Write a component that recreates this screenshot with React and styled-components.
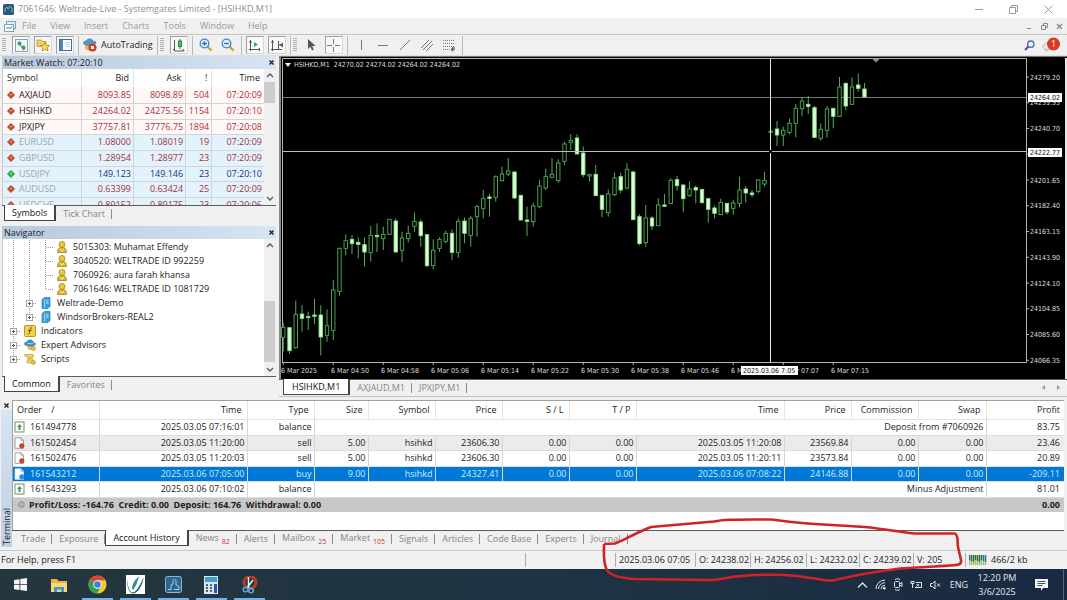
import React from "react";
import styled, { createGlobalStyle, css } from "styled-components";

const GlobalStyle = createGlobalStyle`
  * { box-sizing: border-box; }
  body { margin: 0; background: #f0f0f0; }
  body, button, input, table { font: 9px/12px "Open Sans", "Noto Sans", sans-serif; color: #1c1c1c; }
  button { border: 0; padding: 0; background: none; white-space: nowrap; }
  ul { list-style: none; margin: 0; padding: 0; }
`;

const Desktop = styled.div`
  position: relative;
  display: flex;
  flex-direction: column;
  min-height: 100vh;
  background: #f0f0f0;
`;

/* ---------- window header ---------- */

const TitleBar = styled.header`
  display: flex;
  align-items: center;
  height: 18px;
  padding: 0 14px 0 3px;
  background: #fff;
  color: #8f8f8f;
  gap: 4px;
`;
const Title = styled.h1`
  margin: 0;
  flex: 1;
  font-size: 9px;
  font-weight: 400;
`;
const WindowButtons = styled.div`
  display: flex;
  align-items: center;
  gap: ${(p) => p.$gap}px;
  button { display: flex; }
`;
const MenuBar = styled.nav`
  display: flex;
  align-items: center;
  height: 16px;
  padding: 0 4px;
  gap: 14px;
  svg { flex: none; }
`;
const MenuItem = styled.button`
  color: #9a9a9a;
  &:first-of-type { margin-left: -8px; }
`;
const Spacer = styled.div`flex: 1;`;

const Toolbar = styled.div`
  display: flex;
  align-items: center;
  height: 22px;
  padding: 0 5px 0 2px;
  border-top: 1px solid #c4c4c4;
  border-bottom: 1px solid #e0e0e0;
`;
const Grip = styled.span`
  width: 4px;
  height: 14px;
  margin-right: 4px;
  background: repeating-linear-gradient(#b0b0b0 0 1px, transparent 1px 2px);
`;
const ToolSep = styled.span`
  width: 1px;
  height: 19px;
  margin: 0 2px;
  background: #b9b9b9;
`;
const ToolButton = styled.button`
  display: flex;
  align-items: center;
  justify-content: center;
  gap: 4px;
  width: ${(p) => (p.$wide ? "auto" : "18px")};
  height: 18px;
  margin: 0 2px;
  ${(p) => p.$pressed && css`
    background: #f8f8f8;
    border: 1px solid #d8d8d8;
    border-top-color: #a0a0a0;
    border-left-color: #a0a0a0;
  `}
`;

/* ---------- panels ---------- */

const Workspace = styled.main`
  flex: 1;
  display: grid;
  grid-template-columns: 279px minmax(0, 1fr);
  align-items: start;
`;
const Sidebar = styled.aside`
  display: flex;
  flex-direction: column;
  gap: 4px;
  padding: 0 3px 0 2px;
`;
const Panel = styled.section`
  display: flex;
  flex-direction: column;
`;
const PanelHead = styled.div`
  display: flex;
  align-items: center;
  justify-content: space-between;
  height: 13px;
  padding: 0 1px 0 2px;
  background: linear-gradient(90deg, #b8c9dc, #d6e4f3);
  h2 { margin: 0; font-size: 9px; font-weight: 400; }
  button { display: flex; }
`;
const PanelBody = styled.div`
  display: flex;
  height: ${(p) => p.$height}px;
  overflow: hidden;
  background: #fff;
  border: solid #c9c9c9;
  border-width: 0 0 0 1px;
`;
const PanelContent = styled.div`
  flex: 1;
  min-width: 0;
`;
const ScrollBar = styled.div`
  display: flex;
  flex-direction: column;
  align-items: center;
  justify-content: space-between;
  width: 12px;
  padding: 4px 0;
  background: linear-gradient(#cdcdcd, #cdcdcd) 0 ${(p) => p.$top}px / 11px ${(p) => p.$size}px no-repeat #f0f0f0;
`;

const TabRow = styled.div`
  display: flex;
  align-items: flex-start;
  height: ${(p) => p.$height}px;
  padding-left: ${(p) => p.$indent || 2}px;
  border-top: 1px solid #5c5c5c;
`;
const Tab = styled.button`
  position: relative;
  height: 15px;
  padding: 0 ${(p) => p.$pad || 7}px;
  color: #858585;
  &::after {
    content: "";
    position: absolute;
    right: 0;
    top: 3px;
    height: 10px;
    border-right: 1px solid #8c8c8c;
  }
  ${(p) => p.$active && css`
    margin-top: -1px;
    height: 16px;
    background: #fff;
    color: #111;
    border: solid #444;
    border-width: 0 2px 1px 1px;
    &::after { display: none; }
  `}
`;
const Count = styled.sub`
  margin-left: 3px;
  font-size: 7px;
  line-height: 7px;
  color: #d03030;
`;

const QuoteTable = styled.table`
  width: 100%;
  table-layout: fixed;
  border-collapse: collapse;
  th, td {
    padding: 0 2px;
    text-align: right;
    font-weight: 400;
    line-height: 12px;
    border-right: 1px solid #d4d4d4;
  }
  th { height: 18px; padding-right: 4px; border-color: #e4e4e4; }
  td { border-bottom: 1px solid #d4d4d4; }
  th:first-child, td:first-child { text-align: left; padding-left: 4px; }
  th:last-child, td:last-child { border-right: 0; }
`;
const QuoteRow = styled.tr`
  height: 16px;
  &:nth-child(3n) { height: 15px; }
  background: ${(p) => (p.$live ? "#fff8f7" : "#e2f3fd")};
  td { color: ${(p) => (p.$up ? "#1b2f86" : "#a8303a")}; }
  td:first-child { color: ${(p) => (p.$live ? "#1c1c1c" : "#9fa6aa")}; }
`;
const SymbolCell = styled.span`
  display: flex;
  align-items: center;
  gap: 4px;
  svg { flex: none; }
`;

const Tree = styled.ul`
  padding: 1px 0 0 2px;
`;
const TreeRow = styled.li`
  display: flex;
  align-items: center;
  height: 14px;
  white-space: nowrap;
  svg { flex: none; }
`;
const TreeIcon = styled.span`
  display: flex;
  margin: 0 5px 0 3px;
`;

/* ---------- chart ---------- */

const ChartPane = styled.section`
  min-width: 0;
  svg.plot { display: block; width: 100%; height: auto; background: #000; }
  svg.plot text { font: 7px "DejaVu Sans Condensed", "DejaVu Sans", sans-serif; fill: #dedede; }
  svg.plot text.dark { fill: #111; }
`;
const ChartTabs = styled(TabRow)`
  position: relative;
  padding-right: 6px;
  border-bottom: 1px solid #c2c2c2;
  > svg { align-self: center; }
`;

/* ---------- terminal ---------- */

const Terminal = styled.section`
  display: grid;
  grid-template-columns: 12px minmax(0, 1fr);
  padding: 3px 3px 3px 0;
  border-bottom: 1px solid #c8c8c8;
`;
const TerminalGrip = styled.div`
  display: flex;
  flex-direction: column;
  align-items: center;
  button { display: flex; height: 10px; align-items: center; }
`;
const TerminalName = styled.h2`
  flex: 1;
  margin: 0;
  width: 11px;
  font-size: 9px;
  line-height: 11px;
  font-weight: 400;
  writing-mode: vertical-rl;
  transform: rotate(180deg);
  background: linear-gradient(#c0d0e2, #d6e4f3);
  padding-top: 2px;
`;
const TerminalView = styled.div`
  display: flex;
  flex-direction: column;
  background: #f0f0f0;
`;
const TerminalSheet = styled.div`
  height: 130px;
  background: #fff;
  border: solid #a0a0a0;
  border-width: 1px 0 0 1px;
`;
const OrderTable = styled.table`
  width: 100%;
  table-layout: fixed;
  border-collapse: collapse;
  th, td {
    padding: 0 2px;
    font-weight: 400;
    line-height: 12px;
    text-align: right;
    white-space: pre;
  }
  th {
    height: 18px;
    padding-right: 5px;
    border-right: 1px solid #e3e3e3;
    border-bottom: 1px solid #e3e3e3;
  }
  td { border-right: 1px solid #d6d6d6; }
  th:first-child { text-align: left; padding-left: 4px; }
  td:first-child { text-align: left; padding-left: 1px; }
  th:last-child, td:last-child { border-right: 0; padding-right: 4px; }
`;
const OrderRow = styled.tr`
  height: 16px;
  &:nth-child(even) { height: 15px; }
  background: ${(p) => (p.$selected ? "#0078d7" : p.$shaded ? "#ebebeb" : "#fff")};
  td { color: ${(p) => (p.$selected ? "#c9eeff" : "#1c1c1c")}; border-bottom: 1px solid #dcdcdc; }
`;
const SummaryRow = styled.tr`
  height: 15px;
  background: #c8c8c8;
  && td { font-weight: 700; border-right: 0; }
`;
const SummaryText = styled.span`
  display: flex;
  align-items: center;
  gap: 4px;
  padding-left: 4px;
`;
const OrderCell = styled.span`
  display: flex;
  align-items: center;
  gap: 5px;
  svg { flex: none; }
`;

/* ---------- status bar and taskbar ---------- */

const Footer = styled.footer`position: relative;`;
const StatusBar = styled.div`
  display: flex;
  align-items: center;
  height: 18px;
`;
const StatusCell = styled.span`
  display: flex;
  align-items: center;
  gap: 4px;
  flex: ${(p) => (p.$width ? "none" : 1)};
  width: ${(p) => (p.$width ? `${p.$width}px` : "auto")};
  height: 14px;
  padding-left: ${(p) => (p.$first ? 1 : 3)}px;
  border-left: ${(p) => (p.$first ? 0 : 1)}px solid #adadad;
  white-space: nowrap;
`;
const TaskBar = styled.div`
  display: flex;
  align-items: stretch;
  height: 31px;
  padding-right: 3px;
  background: linear-gradient(90deg, #24373f, #1e3243 60%, #1a2942);
  color: #e8e8e8;
`;
const TaskButton = styled.button`
  display: flex;
  align-items: center;
  justify-content: center;
  width: ${(p) => (p.$start ? 40 : 38)}px;
  background: ${(p) => (p.$open ? "linear-gradient(#76b0e4, #76b0e4) 50% 100% / 31px 2px no-repeat" : "none")};
`;
const Tray = styled.div`
  display: flex;
  align-items: center;
  gap: 7px;
  padding-right: 15px;
  border-right: 1px solid #55667a;
`;
const Language = styled.span`
  margin-left: 2px;
`;
const Clock = styled.time`
  width: 44px;
  margin-right: 9px;
  line-height: 14px;
  text-align: center;
`;
const Annotation = styled.svg`
  position: absolute;
  right: 103px;
  bottom: 16px;
  pointer-events: none;
`;

/* ---------- small drawings ---------- */

const Svg = ({ w = 14, h = w, box, children }) => (
  <svg width={w} height={h} viewBox={box || `0 0 ${w} ${h}`} fill="none" aria-hidden="true">{children}</svg>
);
const CloseX = () => <Svg w={7}><path d="M1.5 1.5l4 4m0-4l-4 4" stroke="#222" strokeWidth="1.4" /></Svg>;
const Chevron = ({ up }) => <Svg w={8} h={5}><path d={up ? "M1 4l3-3 3 3" : "M1 1l3 3 3-3"} stroke="#555" strokeWidth="1.3" /></Svg>;
const Diamond = ({ up }) => (
  <Svg w={8}>
    <path d="M4 .5L7.5 4 4 7.5.5 4z" fill={up ? "#34b046" : "#cf4a22"} stroke={up ? "#1d8a33" : "#9e3a1a"} strokeWidth=".8" />
    <circle cx="4" cy="3.6" r=".9" fill={up ? "#a6eaa0" : "#f4b183"} />
  </Svg>
);
const Lens = ({ minus }) => (
  <Svg w={14}>
    <path d="M8.5 8.5l4 4" stroke="#c9a23c" strokeWidth="2.4" />
    <circle cx="5.5" cy="5.5" r="4.3" fill="#dcefff" stroke="#3b86c8" strokeWidth="1.3" />
    <path d={minus ? "M3.2 5.5h4.6" : "M3.2 5.5h4.6M5.5 3.2v4.6"} stroke="#2b6fb0" strokeWidth="1.3" />
  </Svg>
);
const LogoIcon = () => (
  <Svg w={11}>
    <rect width="11" height="11" rx="1.5" fill="#2d5878" />
    <path d="M2 8V5l2-2 1 2 2-3 2 2v4" stroke="#87b4d2" />
  </Svg>
);
const PersonIcon = () => (
  <Svg w={12}>
    <path d="M1.5 11.5c0-3 .8-5 4.500-5s4.500 2 4.500 5z" fill="#d9b52c" stroke="#a5811a" strokeWidth=".8" />
    <circle cx="6" cy="3.500" r="3" fill="#e8c63c" stroke="#a5811a" strokeWidth=".8" />
    <path d="M4.200 8l1.800 2.500L7.800 8M5 2.500l1-.5" stroke="#fff0a0" />
  </Svg>
);
const ServerIcon = () => (
  <Svg w={12}>
    <path d="M2 2.500L4.500.5H10v9L8 11.500H2z" fill="#38a4dc" stroke="#1f78ac" strokeWidth=".7" />
    <path d="M4.500 2.500v8" stroke="#8fd2f2" />
    <path d="M6 4h2.500M6 6h2.500" stroke="#dff4ff" strokeWidth=".8" />
  </Svg>
);
const IndicatorIcon = () => (
  <Svg w={12}>
    <rect x=".5" y=".5" width="11" height="11" rx="1" fill="#f0d24a" stroke="#b8962a" />
    <path d="M8 3c-2-.8-2 1-2.300 3S5 9.500 3.800 9M4.200 5.500h3.300" stroke="#5e4b10" strokeWidth="1" />
  </Svg>
);
const ExpertIcon = () => (
  <Svg w={12}>
    <path d="M3.500 6h6v4l-3 1.500-3-1.500z" fill="#e6bf63" />
    <path d="M.5 4.500C1 3 3 3.200 3.500 2S8 .2 9 2.500s2.500 1 2.500 2.500-3 2.200-6 2S0 6 .5 4.500z" fill="#3d93c8" stroke="#256a99" strokeWidth=".6" />
    <path d="M3.500 4c2 1 4 1 5.500 0" stroke="#b5dcf2" />
    <circle cx="9.500" cy="9.500" r="2" fill="#efc531" stroke="#a98516" strokeWidth=".6" />
  </Svg>
);
const ScriptIcon = () => (
  <Svg w={12}>
    <path d="M1 1.500h8c1 0 1 2 0 2H8l1 6.500H3L4 3.500H1.500c-1 0-1.200-2-.5-2z" fill="#f3d76a" stroke="#b8962a" strokeWidth=".7" />
    <path d="M4.500 5h3M4.500 7h3" stroke="#b8962a" strokeWidth=".7" />
    <circle cx="9.500" cy="9.500" r="2" fill="#efc531" stroke="#a98516" strokeWidth=".6" />
  </Svg>
);
const BalanceIcon = () => (
  <Svg w={11} h={12}>
    <rect x="1" y="1" width="9" height="10" fill="#fff" stroke="#6e8f6e" />
    <path d="M5.500 3L8 6H6.500v3h-2V6H3z" fill="#35a045" />
  </Svg>
);
const DealIcon = ({ selected }) => (
  <Svg w={11} h={12}>
    <path d="M1 .8h6l2.500 2.500v8H1z" fill="#fff" stroke={selected ? "#cfe6fa" : "#888"} strokeWidth=".8" />
    <path d="M7 .8v2.500h2.500" stroke="#888" strokeWidth=".7" />
    <circle cx="7.800" cy="8.800" r="2.600" fill={selected ? "#2f8fdf" : "#c9442c"} />
  </Svg>
);
const Branch = ({ kind, last }) => (
  <Svg w={16} h={14}>
    {kind !== "box" && <path d={last ? "M8.500 0v7" : "M8.500 0v14"} stroke="#9a9a9a" strokeDasharray="1 1" />}
    {kind === "tee" && <path d="M9 7.500h7" stroke="#9a9a9a" strokeDasharray="1 1" />}
    {kind === "box" && (
      <>
        <path d={last ? "M8.500 0v5" : "M8.500 0v14"} stroke="#9a9a9a" strokeDasharray="1 1" />
        <path d="M12 7.500h4" stroke="#9a9a9a" strokeDasharray="1 1" />
        <rect x="5.500" y="4.500" width="6" height="6" fill="#fff" stroke="#a5a5a5" />
        <path d="M7 7.500h3M8.500 6v3" stroke="#555" />
      </>
    )}
  </Svg>
);

/* ---------- data ---------- */

const quotes = [
  ["AXJAUD", "8093.85", "8098.89", "504", "07:20:09", true],
  ["HSIHKD", "24264.02", "24275.56", "1154", "07:20:10", true],
  ["JPXJPY", "37757.81", "37776.75", "1894", "07:20:08", true],
  ["EURUSD", "1.08000", "1.08019", "19", "07:20:09"],
  ["GBPUSD", "1.28954", "1.28977", "23", "07:20:09"],
  ["USDJPY", "149.123", "149.146", "23", "07:20:10"],
  ["AUDUSD", "0.63399", "0.63424", "25", "07:20:09"],
  ["USDCHF", "0.89152", "0.89175", "23", "07:20:06"],
];

const tree = [
  [3, "5015303: Muhamat Effendy", PersonIcon],
  [3, "3040520: WELTRADE ID 992259", PersonIcon],
  [3, "7060926: aura farah khansa", PersonIcon],
  [3, "7061646: WELTRADE ID 1081729", PersonIcon, true],
  [2, "Weltrade-Demo", ServerIcon],
  [2, "WindsorBrokers-REAL2", ServerIcon, true],
  [1, "Indicators", IndicatorIcon],
  [1, "Expert Advisors", ExpertIcon],
  [1, "Scripts", ScriptIcon, true],
];

const orderColumns = [
  ["Order", 86], ["Time", 148], ["Type", 67], ["Size", 54], ["Symbol", 67], ["Price", 67], ["S / L", 67],
  ["T / P", 67], ["Time", 148], ["Price", 67], ["Commission", 67], ["Swap", 68], ["Profit", 78],
];
const orders = [
  { id: "161494778", time: "2025.03.05 07:16:01", type: "balance", note: "Deposit from #7060926", profit: "83.75" },
  { id: "161502454", time: "2025.03.05 11:20:00", type: "sell", cells: ["5.00", "hsihkd", "23606.30", "0.00", "0.00", "2025.03.05 11:20:08", "23569.84", "0.00", "0.00"], profit: "23.46", shaded: true },
  { id: "161502476", time: "2025.03.05 11:20:03", type: "sell", cells: ["5.00", "hsihkd", "23606.30", "0.00", "0.00", "2025.03.05 11:20:11", "23573.84", "0.00", "0.00"], profit: "20.89" },
  { id: "161543212", time: "2025.03.06 07:05:00", type: "buy", cells: ["9.00", "hsihkd", "24327.41", "0.00", "0.00", "2025.03.06 07:08:22", "24146.88", "0.00", "0.00"], profit: "-209.11", selected: true },
  { id: "161543293", time: "2025.03.06 07:10:02", type: "balance", note: "Minus Adjustment", profit: "81.01" },
];
const terminalTabs = [
  ["Trade"], ["Exposure"], ["Account History"], ["News", "82"], ["Alerts"], ["Mailbox", "25"], ["Market", "105"],
  ["Signals"], ["Articles"], ["Code Base"], ["Experts"], ["Journal"],
];

/* Bars: [falling, high, bodyTop, bodyBottom, low] in thirds of a pixel below each block's base line. */
const barBlocks = [
  { base: 180, bars: [
    [0, 428, 442, 472, 515], [1, 443, 443, 512, 522], [0, 362, 403, 503, 506], [1, 375, 402, 415, 455],
    [1, 395, 410, 413, 450], [1, 356, 405, 409, 432], [1, 376, 405, 471, 526], [0, 388, 437, 466, 486],
    [0, 300, 330, 451, 480], [0, 203, 205, 334, 347], [0, 163, 182, 205, 226], [1, 165, 178, 191, 222],
    [1, 172, 187, 193, 235], [1, 172, 194, 216, 260], [0, 138, 166, 217, 245], [1, 130, 166, 170, 216],
    [0, 140, 163, 176, 210], [0, 118, 118, 163, 163], [1, 115, 123, 216, 217], [0, 155, 174, 211, 246],
    [0, 137, 160, 176, 187], [0, 97, 124, 139, 155], [1, 118, 126, 167, 200], [1, 164, 164, 257, 262],
    [0, 178, 211, 257, 268], [0, 172, 178, 205, 215], [0, 152, 160, 184, 190], [1, 148, 160, 217, 240],
    [0, 115, 124, 217, 233], [1, 113, 123, 160, 190], [0, 108, 115, 166, 200], [0, 74, 80, 110, 170],
    [0, 30, 56, 85, 115], [1, 42, 51, 55, 110], [0, -14, -10, 52, 65], [0, -40, -18, 2, 4],
    [0, -66, -27, -18, -12], [1, -26, -24, 54, 56], [1, 46, 46, 120, 122], [1, 80, 120, 124, 168],
  ] },
  { base: 120, bars: [
    [0, 248, 258, 305, 320], [0, 180, 198, 260, 265], [0, 146, 170, 204, 210], [0, 114, 163, 172, 175],
    [0, 118, 129, 182, 188], [0, 66, 72, 124, 136], [0, 42, 61, 67, 90], [1, 43, 54, 102, 102],
    [1, 80, 99, 164, 172], [0, 163, 164, 168, 185], [1, 135, 163, 227, 227], [1, 226, 226, 268, 292],
    [0, 208, 222, 278, 290], [0, 158, 174, 224, 228], [1, 158, 170, 210, 220], [0, 130, 148, 204, 208],
    [1, 152, 156, 299, 300], [1, 283, 290, 371, 376], [0, 255, 294, 368, 380], [1, 288, 294, 318, 330],
    [0, 235, 255, 317, 318], [1, 222, 255, 259, 260], [0, 175, 181, 250, 252], [1, 168, 179, 197, 212],
    [1, 193, 195, 236, 277], [0, 184, 207, 227, 230], [1, 196, 203, 210, 250], [1, 208, 208, 248, 250],
    [1, 236, 236, 268, 308], [1, 256, 264, 280, 295], [0, 236, 247, 284, 285], [1, 250, 250, 276, 284],
    [0, 240, 249, 265, 284], [0, 170, 210, 250, 262], [1, 198, 207, 219, 248], [1, 210, 219, 224, 232],
    [0, 178, 180, 214, 220], [0, 156, 181, 192, 200], [0, 33, 33, 37, 37],
  ] },
  { base: 50, bars: [
    [1, 213, 237, 255, 288], [0, 230, 241, 255, 288], [0, 206, 220, 247, 253], [0, 162, 175, 220, 262],
    [0, 143, 153, 176, 198], [1, 138, 163, 169, 192], [1, 168, 173, 262, 264], [0, 220, 238, 265, 272],
    [0, 168, 177, 241, 263], [1, 175, 175, 199, 235], [0, 81, 111, 199, 201], [1, 98, 100, 168, 181],
    [0, 82, 111, 163, 165], [1, 70, 105, 115, 125], [1, 99, 117, 141, 141],
  ] },
];
const bars = barBlocks
  .flatMap(({ base, bars: list }) => list.map(([falling, ...ys]) => [falling, ...ys.map((y) => base + y / 3)]))
  .map((bar, i) => [283.25 + i * 6.25, ...bar]);

const prices = ["24279.20", "24259.95", "24240.70", "24220.90", "24201.65", "24182.40", "24163.15", "24143.90", "24124.10", "24104.85", "24085.60", "24066.35"];
const times = ["6 Mar 2025", "6 Mar 04:50", "6 Mar 04:58", "6 Mar 05:06", "6 Mar 05:14", "6 Mar 05:22", "6 Mar 05:30", "6 Mar 05:38", "6 Mar 05:46", "6 Mar 05:54", "6 Mar 07:07", "6 Mar 07:15"];

function PriceChart() {
  return (
    <svg className="plot" viewBox="279 56 788 323" role="img" aria-label="HSIHKD one minute candlestick chart">
      <rect x="279" y="56" width="2" height="323" fill="#8a8a8a" />
      <path d="M279 56.500h788" stroke="#777" />
      <path d="M282.500 363V58.500h744V362.500H282.500" stroke="#b5b5b5" fill="none" />
      <path d="M1066 58v321" stroke="#e8e8e8" strokeWidth="2" />
      <path d="M283 97.500h743" stroke="#73777d" />
      <path d="M872 58.500h8l-4 4z" fill="#8a93a8" />
      {bars.map(([x, falling, high, top, bottom, low], i) => (
        <g key={i}>
          <path d={`M${x} ${high}V${top}M${x} ${bottom}V${low}`} stroke="#4fae55" />
          <rect x={x - 1.7} y={top} width="3.4" height={Math.max(bottom - top, 1)} fill={falling ? "#d9ffd2" : "#000"} stroke={falling ? "#8fe08c" : "#4fae55"} strokeWidth=".9" />
        </g>
      ))}
      <path d="M283 151.500h743" stroke="#bdbdbd" />
      <path d="M770.500 59V363" stroke="#e6e6e6" />
      <rect x="769" y="150" width="3" height="3" fill="#000" />
      <path d="M285 63h6l-3 4z" fill="#fff" />
      <text x="294" y="67" xmlSpace="preserve">HSIHKD,M1  24270.02 24274.02 24264.02 24264.02</text>
      {prices.map((p, i) => (
        <g key={p}>
          <path d={`M1026 ${77 + i * 25.75}h3`} stroke="#b5b5b5" />
          <text x="1030" y={79.500 + i * 25.75}>{p}</text>
        </g>
      ))}
      {times.map((t, i) => (
        <g key={t}>
          <path d={`M${283.25 + i * 50} 363v2`} stroke="#b5b5b5" />
          <text x={281 + i * 50} y="373">{t}</text>
        </g>
      ))}
      <rect x="1028" y="93" width="34" height="9" fill="#fff" />
      <text className="dark" x="1030" y="100">24264.02</text>
      <rect x="1028" y="148" width="34" height="9" fill="#fff" />
      <text className="dark" x="1030" y="155">24222.77</text>
      <rect x="741" y="366" width="57" height="9" fill="#fff" />
      <text className="dark" x="743" y="373">2025.03.06 7:05</text>
    </svg>
  );
}

function MainToolbar() {
  const stroke = { stroke: "#777", strokeWidth: 1 };
  return (
    <Toolbar>
      <Grip />
      <ToolButton $pressed aria-label="Market Watch"><Svg w={13}><rect x=".5" y=".5" width="12" height="12" fill="#eef6fb" stroke="#7aa5bd" /><path d="M4 5l5 5" stroke="#3a7d48" /><circle cx="4.500" cy="4.500" r="2" fill="#38a04a" /><circle cx="8.500" cy="8.500" r="2" fill="#35a06a" /><path d="M8.500 7.500l2 2-2 2-1-1z" fill="#d45b36" /></Svg></ToolButton>
      <ToolButton $pressed aria-label="Navigator"><Svg w={14}><path d="M1 2h4l1 1.500h4v5H1z" fill="#f2cf63" stroke="#b8922c" strokeWidth=".8" /><path d="M9 4.500l1.500 2.800 3 .3-2.200 2 .7 3.200-3-1.500-3 1.500.7-3.200-2.200-2 3-.3z" fill="#f9dc55" stroke="#a88420" strokeWidth=".8" /></Svg></ToolButton>
      <ToolButton $pressed aria-label="Terminal"><Svg w={13} h={12}><rect x=".5" y=".5" width="12" height="11" fill="#fff" stroke="#39729f" /><path d="M1 1h3v10H1z" fill="#4d87b5" /><path d="M6 3.500h5M6 5.500h5M6 7.500h5" stroke="#a9c4d8" strokeWidth=".7" /></Svg></ToolButton>
      <ToolSep />
      <ToolButton $wide>
        <Svg w={14}><path d="M2 6h8v5l-4 2-4-2z" fill="#e2bb58" /><path d="M.5 4.500C1 3 3 3.500 4 2s5-1.500 6 .5 3 .5 3 2-4 3-7 2.800S0 6.500.5 4.500z" fill="#4a9ac5" stroke="#2d6e98" strokeWidth=".6" /><circle cx="9.500" cy="9.500" r="4" fill="#cf3b28" /><path d="M8 8h3v3H8z" fill="#fff" /></Svg>
        AutoTrading
      </ToolButton>
      <ToolSep /><Grip />
      <ToolButton $pressed aria-label="Candlesticks"><Svg w={13}><path d="M2.500 1v11h10M1 10.500h2M11 12V10" stroke="#555" /><path d="M8 0v10" stroke="#1f8f32" /><rect x="6.500" y="2" width="3" height="5.500" fill="#3fc257" stroke="#1f8f32" /></Svg></ToolButton>
      <ToolSep />
      <ToolButton aria-label="Zoom In"><Lens /></ToolButton>
      <ToolButton aria-label="Zoom Out"><Lens minus /></ToolButton>
      <ToolSep />
      <ToolButton $pressed aria-label="Auto Scroll"><Svg w={13}><path d="M2.500 1v11M1 10.500h11M1 3h3M11.500 9v3" stroke="#555" /><path d="M6 3l4 2.500L6 8z" fill="#3fae50" /></Svg></ToolButton>
      <ToolButton $pressed aria-label="Chart Shift"><Svg w={13}><path d="M2.500 1v11M1 10.500h11M1 3h3M8.500 2v8M9 6h3" stroke="#555" /><path d="M13 3.500L9.500 6 13 8.500z" fill="#555" /></Svg></ToolButton>
      <ToolSep /><Grip />
      <ToolButton aria-label="Cursor"><Svg w={9} h={12}><path d="M1 0v10l2.500-2.300L5 11.500l1.700-.8L5.200 7H8.500z" fill="#555" /></Svg></ToolButton>
      <ToolButton $pressed aria-label="Crosshair"><Svg w={13}><path d="M6.500 0v5M6.500 8v5M0 6.500h5M8 6.500h5" {...stroke} /></Svg></ToolButton>
      <ToolSep />
      <ToolButton aria-label="Vertical Line"><Svg w={12}><path d="M6.500 1v10" {...stroke} /></Svg></ToolButton>
      <ToolButton aria-label="Horizontal Line"><Svg w={12}><path d="M1 6.500h10" {...stroke} /></Svg></ToolButton>
      <ToolButton aria-label="Trendline"><Svg w={12}><path d="M1 11L11 1" {...stroke} /></Svg></ToolButton>
      <ToolButton aria-label="Channel"><Svg w={12}><path d="M0 9l8-8M2 11l9-9M5 12l7-7" {...stroke} /></Svg></ToolButton>
      <ToolButton aria-label="Fibonacci"><Svg w={14}><path d="M1 2.500h12M1 5.500h12M1 8.500h12M1 11.500h7" stroke="#777" strokeDasharray="1 1" /><path d="M10 13.500V10h3M10 11.800h2.500" stroke="#333" /></Svg></ToolButton>
      <ToolSep />
      <Spacer />
      <ToolButton aria-label="Search"><Svg w={11}><circle cx="6.800" cy="4.200" r="3.200" stroke="#456fb8" strokeWidth="1.300" /><path d="M4.500 6.500L1 10" stroke="#2d54a0" strokeWidth="1.800" /></Svg></ToolButton>
      <ToolButton aria-label="Messages, 1 new"><Svg w={18} h={16}><path d="M1 9.500c0-4 9-4 9 0 0 2-2 3-4 3L4.500 14.500v-2C2.500 12.500 1 11.500 1 9.500z" fill="#e8e8e8" stroke="#b5b5b5" /><circle cx="11.500" cy="7" r="6.500" fill="#d83a22" /><text x="11.500" y="10" fontSize="9" fill="#fff" textAnchor="middle">1</text></Svg></ToolButton>
    </Toolbar>
  );
}

function MarketWatch() {
  return (
    <Panel>
      <PanelHead><h2>Market Watch: 07:20:10</h2><button aria-label="Close Market Watch"><CloseX /></button></PanelHead>
      <PanelBody $height={136}>
        <PanelContent>
          <QuoteTable>
            <colgroup><col width="30%" /><col width="20%" /><col width="20%" /><col width="10%" /><col width="20%" /></colgroup>
            <thead><tr><th>Symbol</th><th>Bid</th><th>Ask</th><th>!</th><th>Time</th></tr></thead>
            <tbody>
              {quotes.map(([name, bid, ask, spread, time, live]) => {
                const up = name === "USDJPY";
                return (
                  <QuoteRow key={name} $live={live} $up={up}>
                    <td><SymbolCell><Diamond up={up} />{name}</SymbolCell></td>
                    <td>{bid}</td><td>{ask}</td><td>{spread}</td><td>{time}</td>
                  </QuoteRow>
                );
              })}
            </tbody>
          </QuoteTable>
        </PanelContent>
        <ScrollBar $top={13} $size={21}><Chevron up /><Chevron /></ScrollBar>
      </PanelBody>
      <TabRow $height={17}><Tab $active>Symbols</Tab><Tab>Tick Chart</Tab></TabRow>
    </Panel>
  );
}

function Navigator() {
  return (
    <Panel>
      <PanelHead><h2>Navigator</h2><button aria-label="Close Navigator"><CloseX /></button></PanelHead>
      <PanelBody $height={137}>
        <PanelContent>
          <Tree>
            {tree.map(([level, name, Icon, last]) => (
              <TreeRow key={name}>
                {Array.from({ length: level - 1 }, (_, i) => <Branch key={i} kind="line" />)}
                <Branch kind={level === 3 ? "tee" : "box"} last={last} />
                <TreeIcon><Icon /></TreeIcon>
                {name}
              </TreeRow>
            ))}
          </Tree>
        </PanelContent>
        <ScrollBar $top={62} $size={61}><Chevron up /><Chevron /></ScrollBar>
      </PanelBody>
      <TabRow $height={17}><Tab $active>Common</Tab><Tab>Favorites</Tab></TabRow>
    </Panel>
  );
}

function TerminalPanel() {
  return (
    <Terminal>
      <TerminalGrip><button aria-label="Close Terminal"><CloseX /></button><TerminalName>Terminal</TerminalName></TerminalGrip>
      <TerminalView>
        <TerminalSheet>
          <OrderTable>
            <colgroup>{orderColumns.map(([, w], i) => <col key={i} width={w} />)}</colgroup>
            <thead><tr>{orderColumns.map(([name], i) => <th key={i}>{i === 0 ? "Order    /" : name}</th>)}</tr></thead>
            <tbody>
              {orders.map((o) => (
                <OrderRow key={o.id} $shaded={o.shaded} $selected={o.selected}>
                  <td><OrderCell>{o.note ? <BalanceIcon /> : <DealIcon selected={o.selected} />}{o.id}</OrderCell></td>
                  <td>{o.time}</td>
                  <td>{o.type}</td>
                  {o.note ? <td colSpan={9}>{o.note}</td> : o.cells.map((c, i) => <td key={i}>{c}</td>)}
                  <td>{o.profit}</td>
                </OrderRow>
              ))}
              <SummaryRow>
                <td colSpan={12}><SummaryText><Svg w={7}><circle cx="3.500" cy="3.500" r="2.800" fill="#b5b5b5" stroke="#888" /></Svg>{"Profit/Loss: -164.76  Credit: 0.00  Deposit: 164.76  Withdrawal: 0.00"}</SummaryText></td>
                <td>0.00</td>
              </SummaryRow>
            </tbody>
          </OrderTable>
        </TerminalSheet>
        <TabRow $height={17}>
          {terminalTabs.map(([name, count]) => (
            <Tab key={name} $active={name === "Account History"}>{name}{count && <Count>{count}</Count>}</Tab>
          ))}
        </TabRow>
      </TerminalView>
    </Terminal>
  );
}

const taskIcons = [
  ["File Explorer", false, <Svg w={18} h={16} key="f"><path d="M1 2h6l1.500 2H17v11H1z" fill="#e9b63e" /><path d="M1 6h16v9H1z" fill="#f8d775" /><path d="M4 15v-5h10v5h-3v-2.500H7V15z" fill="#3f95c9" /></Svg>],
  ["Chrome", true, <Svg w={19} h={19} box="0 0 20 20" key="c"><circle cx="10" cy="10" r="9.500" fill="#f7c52d" /><path d="M10 10L1.800 5.200A9.500 9.500 0 0 0 9.500 19.500l4-7.500z" fill="#2fa04f" /><path d="M10 10L1.800 5.200A9.500 9.500 0 0 1 18.200 5.500H10z" fill="#dc4437" /><circle cx="10" cy="10" r="4.500" fill="#fff" /><circle cx="10" cy="10" r="3.500" fill="#3e7de8" /></Svg>],
  ["Weltrade", true, <Svg w={19} h={19} key="w"><rect width="19" height="19" fill="#fff" /><path d="M1.500 4c0 7 2 14 5.500 13.500S15 9 17.500 2C17 10 12 18 7.500 18.500S.5 11 1.500 4z" fill="#1b5f68" /><path d="M6 14C6.500 8 9 4 13.500 1.500 11 6 10.500 11 7 15z" fill="#2a8f9c" /></Svg>],
  ["MetaTrader", true, <Svg w={17} h={17} key="m"><rect x=".5" y=".5" width="16" height="16" rx="2" fill="#2e668f" stroke="#8fb6d1" /><path d="M3 13.500h3V9l2-1V4.500L9.500 3 11 4.500V9l3 1.500v3H9" stroke="#a9cce2" /></Svg>],
  ["Calculator", true, <Svg w={14} h={18} key="k"><rect width="14" height="18" fill="#d9e6ee" /><path d="M1 1h12v5H1z" fill="#3c9fd6" /><path d="M2 8h2v2H2zM6 8h2v2H6zM2 11h2v2H2zM6 11h2v2H6zM2 14h2v2H2zM6 14h2v2H6z" fill="#51606d" /><path d="M10 8h3v9h-3z" fill="#2457a6" /></Svg>],
  ["Snipping Tool", true, <Svg w={17} h={18} key="s"><circle cx="9" cy="6.500" r="6" stroke="#b73b25" strokeWidth="3" /><path d="M7.500 1v11M12 4l-6 8" stroke="#e8edf2" strokeWidth="1.500" /><circle cx="4.500" cy="13.500" r="2.300" stroke="#57a7e6" strokeWidth="1.500" /><circle cx="10" cy="14.500" r="2.300" stroke="#57a7e6" strokeWidth="1.500" /></Svg>],
];

const white = { stroke: "#e4e4e4", strokeWidth: 1 };

export default function App() {
  return (
    <Desktop>
      <GlobalStyle />
      <TitleBar>
        <LogoIcon />
        <Title>7061646: Weltrade-Live - Systemgates Limited - [HSIHKD,M1]</Title>
        <WindowButtons $gap={26}>
          <button aria-label="Minimize"><Svg w={9}><path d="M1 4.500h8" stroke="#999" /></Svg></button>
          <button aria-label="Restore"><Svg w={9}><path d="M.5 2.500h6v6h-6zM2.500 2.500v-2h6v6h-2" stroke="#999" /></Svg></button>
          <button aria-label="Close"><Svg w={9}><path d="M.5.5l8 8m0-8l-8 8" stroke="#999" /></Svg></button>
        </WindowButtons>
      </TitleBar>
      <MenuBar>
        <Svg w={12}><rect x="2.500" y="1.500" width="9" height="7" fill="#e3f0f8" stroke="#78a5c2" /><rect x=".5" y="4.500" width="9" height="7" fill="#fff" stroke="#78a5c2" /><path d="M2 9l2-2 2 2 2-3" stroke="#4b8bb3" /></Svg>
        {["File", "View", "Insert", "Charts", "Tools", "Window", "Help"].map((m) => <MenuItem key={m}>{m}</MenuItem>)}
        <Spacer />
        <WindowButtons $gap={8}>
          <button aria-label="Minimize chart"><Svg w={7}><path d="M1 5.500h4" stroke="#888" /></Svg></button>
          <button aria-label="Restore chart"><Svg w={7}><path d="M.5 2.500h4v4h-4zM2.500 2V.5h4v4H5" stroke="#888" /></Svg></button>
          <button aria-label="Close chart"><Svg w={7}><path d="M1 1l5 5m0-5L1 6" stroke="#888" strokeWidth="1.300" /></Svg></button>
        </WindowButtons>
      </MenuBar>
      <MainToolbar />
      <Workspace>
        <Sidebar><MarketWatch /><Navigator /></Sidebar>
        <ChartPane>
          <PriceChart />
          <ChartTabs $height={18} $indent={4}>
            <Tab $active $pad={8}>HSIHKD,M1</Tab><Tab>AXJAUD,M1</Tab><Tab>JPXJPY,M1</Tab>
            <Spacer />
            <Svg w={20} h={6}><path d="M4 0v5L1 2.500zM16 0v5l3-2.500z" fill="#999" /></Svg>
          </ChartTabs>
        </ChartPane>
      </Workspace>
      <TerminalPanel />
      <Footer>
        <StatusBar>
          <StatusCell $first>For Help, press F1</StatusCell>
          <StatusCell $width={90} />
          <StatusCell $width={80}>2025.03.06 07:05</StatusCell>
          <StatusCell $width={55}>O: 24238.02</StatusCell>
          <StatusCell $width={56}>H: 24256.02</StatusCell>
          <StatusCell $width={53}>L: 24232.02</StatusCell>
          <StatusCell $width={54}>C: 24239.02</StatusCell>
          <StatusCell $width={52}>V: 205</StatusCell>
          <StatusCell $width={102}>
            <Svg w={18} h={10}>
              {Array.from({ length: 9 }, (_, i) => (
                <React.Fragment key={i}>
                  <path d={`M${i * 2 + 0.5} 0v${5 + (i % 3)}`} stroke={i > 6 ? "#2a6d8e" : "#2f6b3a"} strokeWidth="1.500" />
                  <path d={`M${i * 2 + 0.5} ${5 + (i % 3)}V10`} stroke="#9cc46a" strokeWidth="1.500" />
                </React.Fragment>
              ))}
            </Svg>
            466/2 kb
          </StatusCell>
        </StatusBar>
        <TaskBar>
          <TaskButton $start aria-label="Start"><Svg w={13}><path d="M0 2l5.500-.8v5H0zM6.300 1L13 0v6.200H6.300zM0 7h5.500v5L0 11.200zM6.300 7H13v6l-6.700-1z" fill="#f4f4f4" /></Svg></TaskButton>
          {taskIcons.map(([name, open, icon]) => <TaskButton key={name} $open={open} aria-label={name}>{icon}</TaskButton>)}
          <Spacer />
          <Tray>
            <Svg w={11} h={8}><path d="M1 6.500l4.500-4.500L10 6.500" {...white} strokeWidth="1.300" /></Svg>
            <Svg w={11}><path d="M1 10A9 9 0 0 1 10 1M3.500 10A6.500 6.500 0 0 1 10 3.700M6 10a4 4 0 0 1 4-3.700" {...white} /><circle cx="9.300" cy="9.300" r="1.200" fill="#fff" /></Svg>
            <Svg w={10} h={13}><rect x="1.500" y="3.500" width="5" height="6" rx="1" {...white} /><path d="M6.500 6l2.500-1.500v4L6.500 7M2 1.500C3.500.5 5.500.5 7 1.500M2 11.500c1.500 1 3.500 1 5 0" {...white} /></Svg>
            <Svg w={13} h={10}><path d="M1 1.500h3v2H1zM2.500 4v4M6 2.500h5.500v5H5M6.500 4l2.500 2.500M9 4L6.500 6.500" {...white} /></Svg>
            <Svg w={11} h={10}><path d="M.5 3.500h2L5 1v8L2.500 6.500h-2zM7 3.500l3 3M10 3.500l-3 3" {...white} /></Svg>
            <Language>ENG</Language>
            <Clock>12:20 PM<br />3/6/2025</Clock>
            <Svg w={13} h={12}><path d="M0 0h13v9H8l-2 3V9H0z" fill="#f4f4f4" /><path d="M2.500 2.500h8M2.500 4.500h8M2.500 6.500h5" stroke="#1a2942" strokeWidth=".8" /></Svg>
          </Tray>
        </TaskBar>
        <Annotation width="364" height="68" viewBox="600 516 364 68" fill="none">
          <path d="M604 544L615 543.500C623 541 633 534 651 527L714 521.500C722 519.500 730 519.300 771 519.500C783 521 800 523.500 815 524L865 527C885 529 905 533 915 533.500L955 533.500C959 536 957 543 958 547L961 560C962 566 957 565 935 566.500L900 568.500C880 571 860 574 835 580C825 582 822 579 810 578C790 574 760 574 741 576C725 577 718 581 707 580L635 579C618 578 608 575 606 568C603 560 604 552 604 544" stroke="#d02424" strokeWidth="2.600" strokeLinejoin="round" />
        </Annotation>
      </Footer>
    </Desktop>
  );
}
